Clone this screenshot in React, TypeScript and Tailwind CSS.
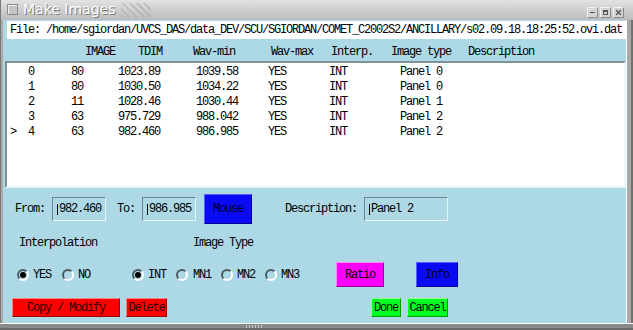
import React from "react";

const rows = [
  { idx: "0", img: "80", tdim: "1023.89", wmin: "1039.58", type: "Panel 0" },
  { idx: "1", img: "80", tdim: "1030.50", wmin: "1034.22", type: "Panel 0" },
  { idx: "2", img: "11", tdim: "1028.46", wmin: "1030.44", type: "Panel 1" },
  { idx: "3", img: "63", tdim: "975.729", wmin: "988.042", type: "Panel 2" },
  { idx: "4", img: "63", tdim: "982.460", wmin: "986.985", type: "Panel 2", sel: true },
];

function Radio({ on }: { on?: boolean }) {
  return (
    <span className="w-[12px] h-[12px] rounded-full border-2 border-t-[#4a5c61] border-l-[#4a5c61] border-b-white border-r-white flex items-center justify-center shrink-0">
      {on && <span className="w-[6px] h-[6px] rounded-full bg-black" />}
    </span>
  );
}

function Field({ value, width }: { value: string; width: string }) {
  return (
    <div
      className={`${width} h-[24px] border border-t-[#6c858b] border-l-[#6c858b] border-b-[#e6f4f8] border-r-[#e6f4f8] flex items-center pl-[4px]`}
    >
      <span className="w-[1px] h-[11px] bg-black mr-[1px]" />
      <span>{value}</span>
    </div>
  );
}

function WinBtn({ children }: { children: React.ReactNode }) {
  return (
    <div className="w-[11px] h-[11px] border border-t-[#f2f2f2] border-l-[#f2f2f2] border-b-[#8a8a8a] border-r-[#8a8a8a] bg-[#d4d4d4] flex items-center justify-center">
      {children}
    </div>
  );
}

export default function App() {
  return (
    <div className="w-[633px] h-[330px] flex flex-col overflow-hidden bg-[#8c8c8c] font-['Liberation_Mono',monospace] text-[12px] tracking-[-1.2px] text-black">
      {/* title bar */}
      <div className="h-[20px] flex items-start bg-linear-to-b from-[#e2e2e2] to-[#bcbcbc] border-l border-[#7a7a7a]">
        <div className="ml-[6px] mt-[4px] w-[11px] h-[11px] border border-[#8a8a8a] bg-[#c4c4c4] shadow-[inset_1px_1px_0_#eeeeee]" />
        <span className="ml-[5px] mt-[1px] leading-[17px] font-['DejaVu_Sans',sans-serif] text-[14px] tracking-normal text-white [text-shadow:1px_1px_0_#7a7a7a]">
          Make Images
        </span>
        <div className="ml-[6px] mt-[3px] w-[30px] h-[14px] opacity-40 bg-[repeating-linear-gradient(45deg,#9a9a9a_0px,#9a9a9a_2px,transparent_2px,transparent_5px)]" />
        <div className="ml-auto mr-[9px] mt-[7px] flex gap-[2px]">
          <WinBtn>
            <span className="w-[5px] h-[1px] bg-[#555]" />
          </WinBtn>
          <WinBtn>
            <span className="w-[5px] h-[5px] border border-[#555] border-t-2" />
          </WinBtn>
          <WinBtn>
            <svg width="7" height="7" viewBox="0 0 7 7">
              <path d="M1 1L6 6M6 1L1 6" stroke="#555" strokeWidth="1.3" />
            </svg>
          </WinBtn>
        </div>
      </div>

      <div className="flex-1 flex">
        {/* left frame */}
        <div className="w-[3px] bg-[#ababab] border-l border-[#777777]" />

        {/* body */}
        <div className="flex-1 bg-[#add8e6] flex flex-col pt-[1px]">
          <div className="ml-[4px] h-[18px] bg-white pl-[3px] leading-[18px] whitespace-nowrap">
            File: /home/sgiordan/UVCS_DAS/data_DEV/SCU/SGIORDAN/COMET_C2002S2/ANCILLARY/s02.09.18.18:25:52.ovi.dat
          </div>

          <div className="mt-[7px] h-[13px] leading-[13px] flex whitespace-nowrap pl-[82px]">
            <span className="w-[53px]">IMAGE</span>
            <span className="w-[55px]">TDIM</span>
            <span className="w-[78px]">Wav-min</span>
            <span className="w-[60px]">Wav-max</span>
            <span className="w-[60px]">Interp.</span>
            <span className="w-[77px]">Image type</span>
            <span>Description</span>
          </div>

          <div className="mt-[2px] ml-[2px] h-[127px] border-2 border-t-[#7d9298] border-l-[#7d9298] border-b-[#e8f6fa] border-r-[#e8f6fa] bg-white pt-[2px] pl-[3px]">
            {rows.map((r) => (
              <div key={r.idx} className="h-[15px] leading-[15px] flex whitespace-nowrap">
                <span className="w-[18px]">{r.sel ? ">" : ""}</span>
                <span className="w-[43px]">{r.idx}</span>
                <span className="w-[47px]">{r.img}</span>
                <span className="w-[78px]">{r.tdim}</span>
                <span className="w-[72px]">{r.wmin}</span>
                <span className="w-[61px]">YES</span>
                <span className="w-[71px]">INT</span>
                <span>{r.type}</span>
              </div>
            ))}
          </div>

          {/* range row */}
          <div className="mt-[6px] h-[30px] flex items-center pl-[12px] whitespace-nowrap">
            <span className="w-[30px]">From:</span>
            <div className="ml-[7px]">
              <Field value="982.460" width="w-[54px]" />
            </div>
            <span className="ml-[11px] w-[18px]">To:</span>
            <div className="ml-[7px]">
              <Field value="986.985" width="w-[54px]" />
            </div>
            <button className="ml-[8px] w-[48px] h-[30px] bg-[#0a0af5] border border-t-[#5a5aff] border-l-[#5a5aff] border-b-[#00008a] border-r-[#00008a] text-[#000028]">
              Mouse
            </button>
            <span className="ml-[33px] w-[72px]">Description:</span>
            <div className="ml-[7px]">
              <Field value="Panel 2" width="w-[84px]" />
            </div>
          </div>

          <div className="mt-[13px] h-[13px] leading-[13px] flex pl-[16px] whitespace-nowrap">
            <span className="w-[174px]">Interpolation</span>
            <span>Image Type</span>
          </div>

          {/* radio row */}
          <div className="mt-[12px] h-[25px] flex items-center pl-[14px] whitespace-nowrap">
            <Radio on />
            <span className="ml-[4px] w-[18px]">YES</span>
            <span className="ml-[11px]">
              <Radio />
            </span>
            <span className="ml-[4px] w-[12px]">NO</span>
            <span className="ml-[42px]">
              <Radio on />
            </span>
            <span className="ml-[4px] w-[18px]">INT</span>
            <span className="ml-[10px]">
              <Radio />
            </span>
            <span className="ml-[5px] w-[18px]">MN1</span>
            <span className="ml-[10px]">
              <Radio />
            </span>
            <span className="ml-[4px] w-[18px]">MN2</span>
            <span className="ml-[10px]">
              <Radio />
            </span>
            <span className="ml-[4px] w-[18px]">MN3</span>
            <button className="ml-[37px] w-[48px] h-[25px] bg-[#ff00ff] border border-t-[#ff8cff] border-l-[#ff8cff] border-b-[#a000a0] border-r-[#a000a0]">
              Ratio
            </button>
            <button className="ml-[32px] w-[42px] h-[25px] bg-[#0a0af5] border border-t-[#5a5aff] border-l-[#5a5aff] border-b-[#00008a] border-r-[#00008a] text-[#000028]">
              Info
            </button>
          </div>

          {/* action row */}
          <div className="mt-[11px] h-[19px] flex pl-[9px] whitespace-nowrap">
            <button className="w-[108px] h-[19px] bg-[#ff0000] border border-t-[#ff8080] border-l-[#ff8080] border-b-[#a00000] border-r-[#a00000] text-[#300000]">
              Copy / Modify
            </button>
            <button className="ml-[6px] w-[41px] h-[19px] bg-[#ff0000] border border-t-[#ff8080] border-l-[#ff8080] border-b-[#a00000] border-r-[#a00000] text-[#300000]">
              Delete
            </button>
            <button className="ml-[204px] w-[30px] h-[19px] bg-[#00ff22] border border-t-[#90ff90] border-l-[#90ff90] border-b-[#00a000] border-r-[#00a000]">
              Done
            </button>
            <button className="ml-[6px] w-[41px] h-[19px] bg-[#00ff22] border border-t-[#90ff90] border-l-[#90ff90] border-b-[#00a000] border-r-[#00a000]">
              Cancel
            </button>
          </div>
        </div>

        {/* right frame */}
        <div className="w-[7px] bg-[#a8a8a8] border-l border-white border-r-2 border-r-[#707070]" />
      </div>

      {/* bottom frame */}
      <div className="h-[7px] bg-[#8a8a8a] border-t border-white border-b-2 border-b-[#6a6a6a] flex pl-[246px]">
        <div className="mt-[1px] w-[16px] h-[3px] bg-[repeating-linear-gradient(90deg,#c8c8c8_0px,#c8c8c8_1px,transparent_1px,transparent_3px)]" />
      </div>
    </div>
  );
}
